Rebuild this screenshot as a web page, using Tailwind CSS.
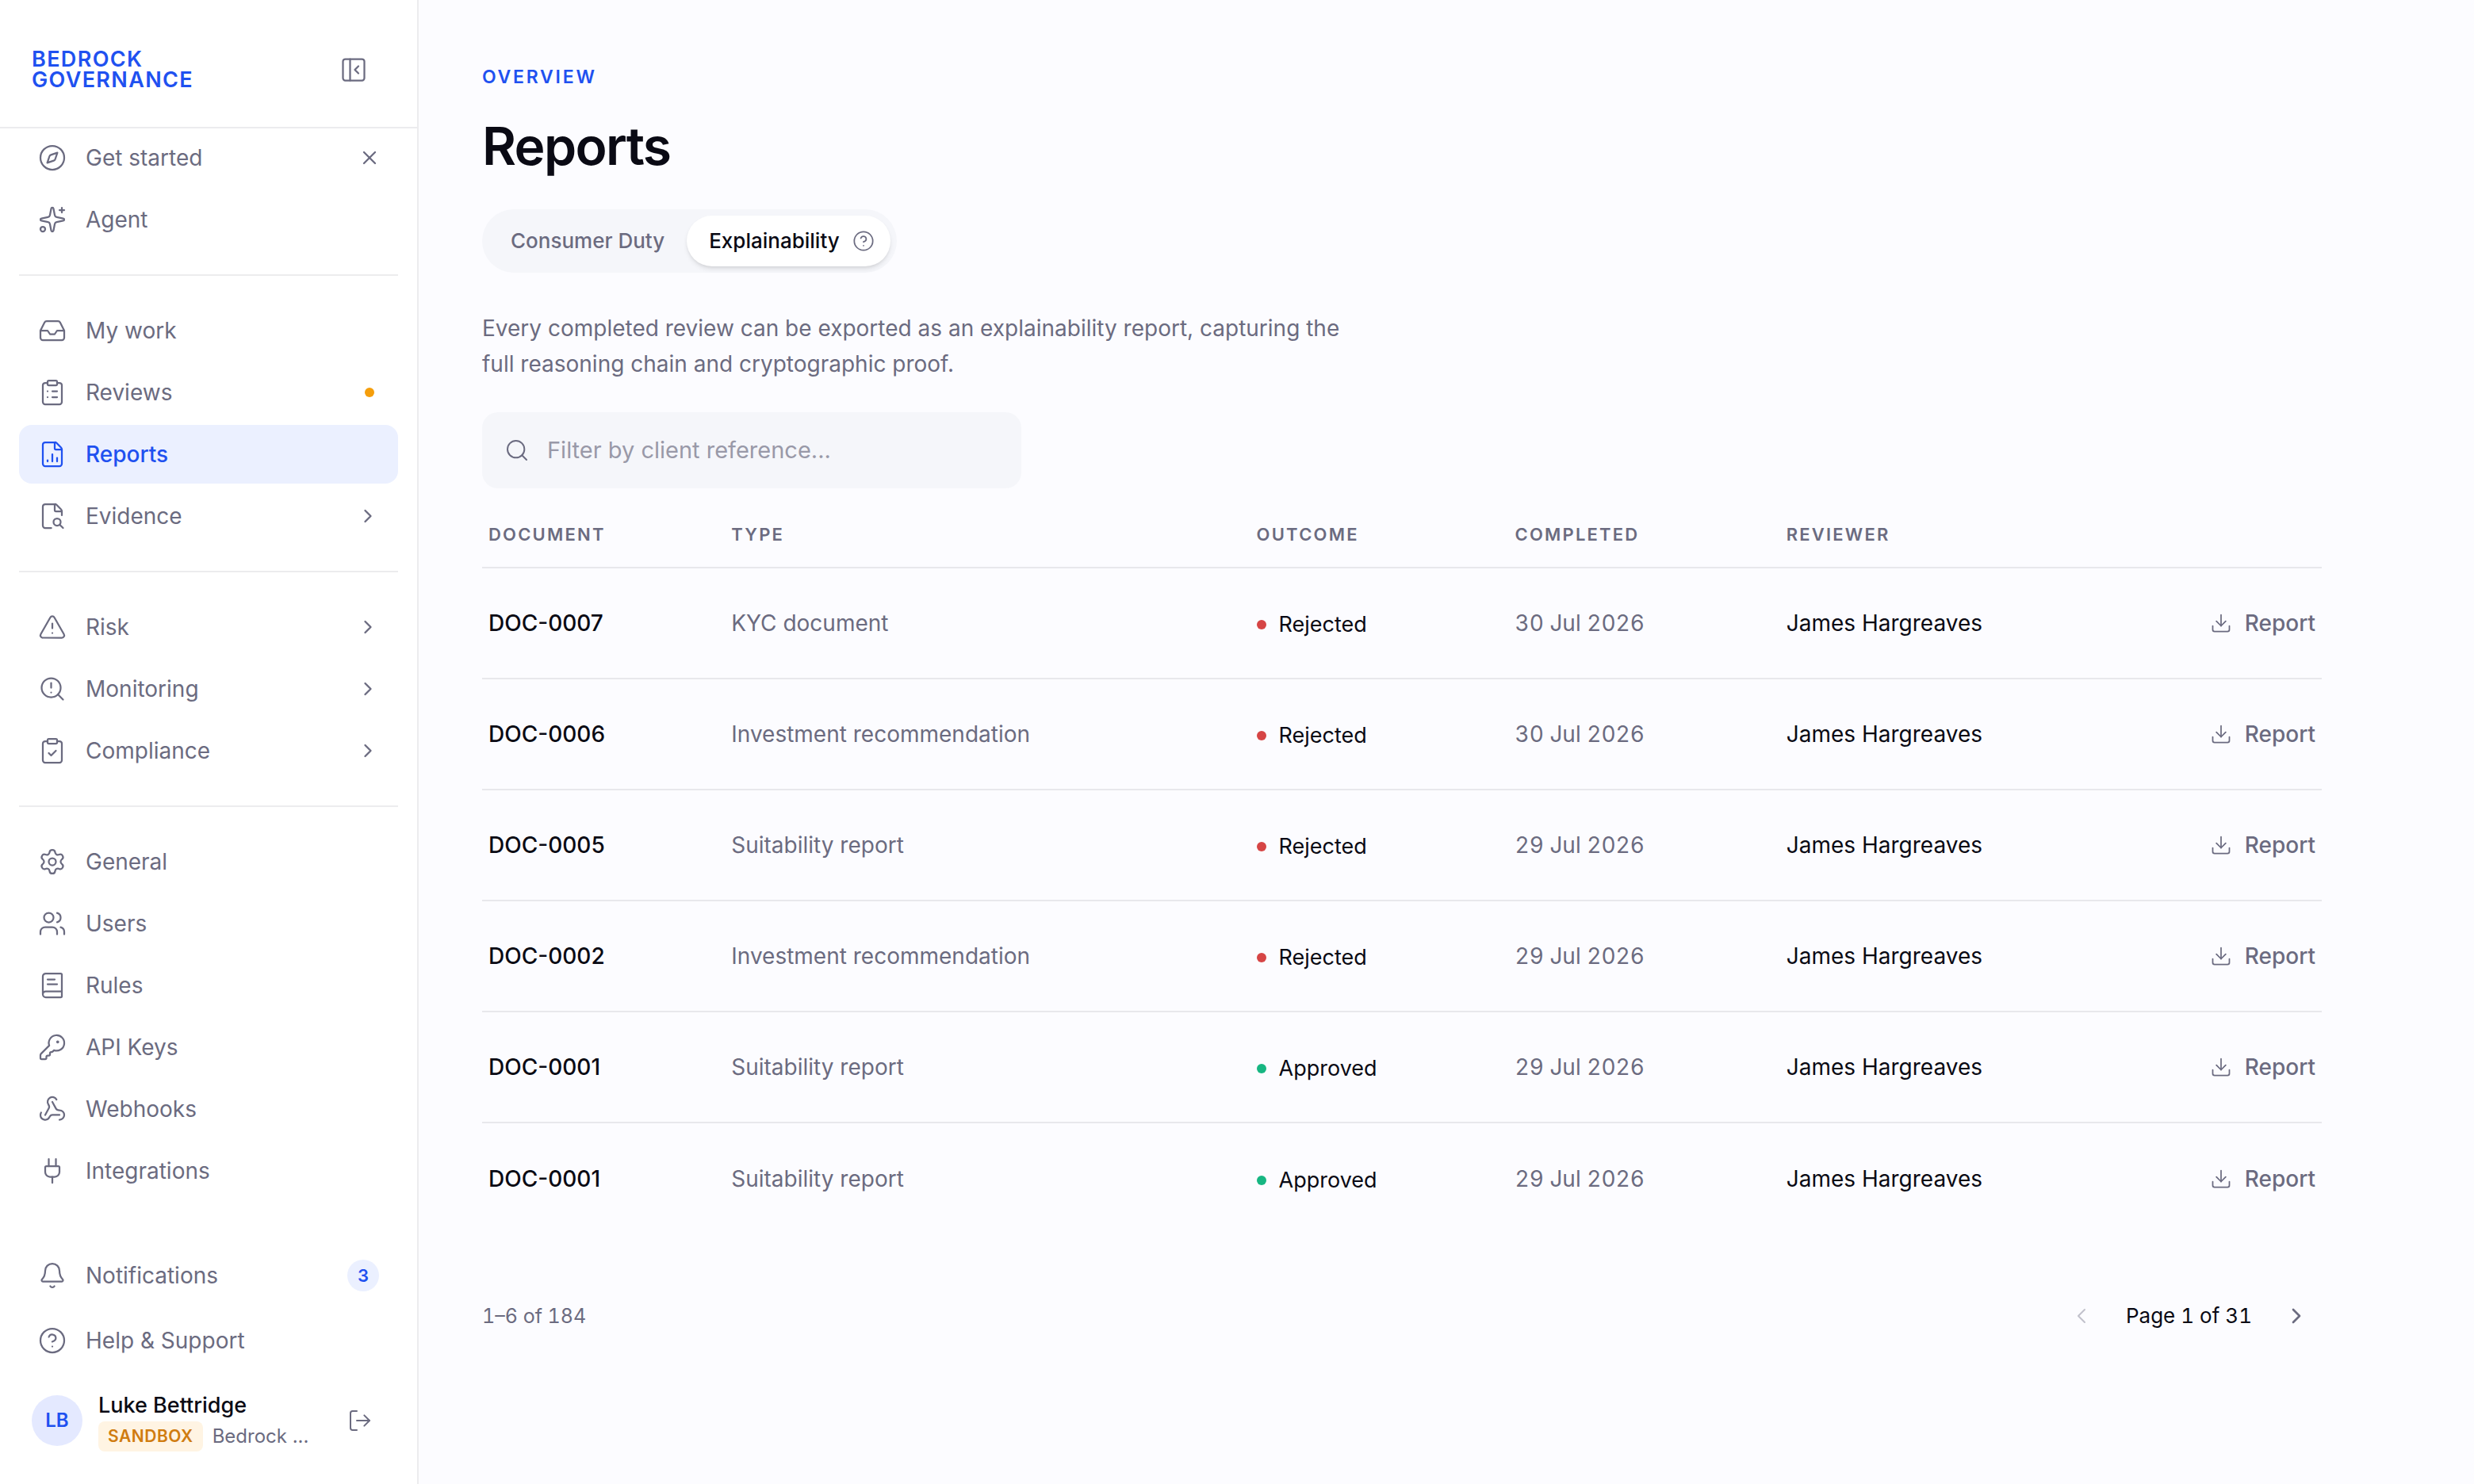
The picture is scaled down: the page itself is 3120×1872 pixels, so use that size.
<!DOCTYPE html>
<html lang="en">
<head>
    <meta charset="UTF-8">
    <meta name="viewport" content="width=device-width, initial-scale=1.0">
    <title>Reports - Bedrock Governance</title>
    <script src="https://cdn.jsdelivr.net/npm/@tailwindcss/browser@4"></script>
</head>
<body class="bg-[#fcfcff] font-['Inter','Liberation_Sans',sans-serif] text-[28px] leading-[42px] text-[#6b6b80] antialiased">
    <!-- Shared icons -->
    <svg class="hidden">
        <symbol id="chevron-right" viewBox="0 0 24 24"><path d="m9 18 6-6-6-6"/></symbol>
        <symbol id="chevron-left" viewBox="0 0 24 24"><path d="m15 18-6-6 6-6"/></symbol>
        <symbol id="help" viewBox="0 0 24 24"><circle cx="12" cy="12" r="10"/><path d="M9.09 9a3 3 0 0 1 5.83 1c0 2-3 3-3 3"/><path d="M12 17h.01"/></symbol>
        <symbol id="download" viewBox="0 0 24 24"><path d="M12 15V3"/><path d="M21 15v4a2 2 0 0 1-2 2H5a2 2 0 0 1-2-2v-4"/><path d="m7 10 5 5 5-5"/></symbol>
    </svg>

    <div class="flex min-h-screen">
        <!-- Sidebar -->
        <aside class="flex w-[528px] shrink-0 flex-col border-r-2 border-[#ececee] bg-white">
            <div class="flex h-[162px] items-center justify-between border-b-2 border-[#ececee] pt-4 pr-[62px] pl-10">
                <a href="#" class="text-[27px] leading-[26px] font-semibold tracking-wider text-[#1f51f0]">BEDROCK<br>GOVERNANCE</a>
                <button type="button" aria-label="Collapse sidebar">
                    <svg class="size-9 fill-none stroke-current stroke-[1.5]" viewBox="0 0 24 24" stroke-linecap="round" stroke-linejoin="round"><rect width="18" height="18" x="3" y="3" rx="2"/><path d="M9 3v18"/><path d="m16 15-3-3 3-3"/></svg>
                </button>
            </div>

            <nav class="flex flex-1 flex-col gap-1 px-6">
                <div class="flex items-center justify-between pr-[22px]">
                    <a href="#" class="flex h-[74px] items-center gap-6 pl-6">
                        <svg class="size-9 fill-none stroke-current stroke-[1.5]" viewBox="0 0 24 24" stroke-linecap="round" stroke-linejoin="round"><path d="m16.24 7.76-1.804 5.411a2 2 0 0 1-1.265 1.265L7.76 16.24l1.804-5.411a2 2 0 0 1 1.265-1.265z"/><circle cx="12" cy="12" r="10"/></svg>
                        Get started
                    </a>
                    <button type="button" aria-label="Dismiss">
                        <svg class="size-7 fill-none stroke-current stroke-2" viewBox="0 0 24 24" stroke-linecap="round"><path d="M18 6 6 18"/><path d="m6 6 12 12"/></svg>
                    </button>
                </div>
                <a href="#" class="flex h-[74px] items-center gap-6 px-6">
                    <svg class="size-9 fill-none stroke-current stroke-[1.5]" viewBox="0 0 24 24" stroke-linecap="round" stroke-linejoin="round"><path d="M11.017 2.814a1 1 0 0 1 1.966 0l1.051 5.558a2 2 0 0 0 1.594 1.594l5.558 1.051a1 1 0 0 1 0 1.966l-5.558 1.051a2 2 0 0 0-1.594 1.594l-1.051 5.558a1 1 0 0 1-1.966 0l-1.051-5.558a2 2 0 0 0-1.594-1.594l-5.558-1.051a1 1 0 0 1 0-1.966l5.558-1.051a2 2 0 0 0 1.594-1.594z"/><path d="M20 2v4"/><path d="M22 4h-4"/><circle cx="4" cy="20" r="2"/></svg>
                    Agent
                </a>

                <hr class="my-7 border-t-2 border-[#ececee]">

                <a href="#" class="flex h-[74px] items-center gap-6 px-6">
                    <svg class="size-9 fill-none stroke-current stroke-[1.5]" viewBox="0 0 24 24" stroke-linecap="round" stroke-linejoin="round"><path d="M22 12h-6l-2 3h-4l-2-3H2"/><path d="M5.45 5.11 2 12v6a2 2 0 0 0 2 2h16a2 2 0 0 0 2-2v-6l-3.45-6.89A2 2 0 0 0 16.76 4H7.24a2 2 0 0 0-1.79 1.11z"/></svg>
                    My work
                </a>
                <a href="#" class="flex h-[74px] items-center gap-6 pr-[30px] pl-6">
                    <svg class="size-9 fill-none stroke-current stroke-[1.5]" viewBox="0 0 24 24" stroke-linecap="round" stroke-linejoin="round"><rect width="8" height="4" x="8" y="2" rx="1"/><path d="M16 4h2a2 2 0 0 1 2 2v14a2 2 0 0 1-2 2H6a2 2 0 0 1-2-2V6a2 2 0 0 1 2-2h2"/><path d="M12 11h4"/><path d="M12 16h4"/><path d="M8 11h.01"/><path d="M8 16h.01"/></svg>
                    Reviews
                    <span class="ml-auto size-3 rounded-full bg-[#f59e0b]"></span>
                </a>
                <a href="#" aria-current="page" class="flex h-[74px] items-center gap-6 rounded-2xl bg-[#ebf0ff] px-6 font-medium text-[#1f51f0]">
                    <svg class="size-9 fill-none stroke-current stroke-[1.5]" viewBox="0 0 24 24" stroke-linecap="round" stroke-linejoin="round"><path d="M6 22a2 2 0 0 1-2-2V4a2 2 0 0 1 2-2h8a2.4 2.4 0 0 1 1.704.706l3.588 3.588A2.4 2.4 0 0 1 20 8v12a2 2 0 0 1-2 2z"/><path d="M14 2v5a1 1 0 0 0 1 1h5"/><path d="M8 18v-1"/><path d="M12 18v-6"/><path d="M16 18v-3"/></svg>
                    Reports
                </a>
                <a href="#" class="flex h-[74px] items-center gap-6 px-6">
                    <svg class="size-9 fill-none stroke-current stroke-[1.5]" viewBox="0 0 24 24" stroke-linecap="round" stroke-linejoin="round"><path d="M11.1 22H6a2 2 0 0 1-2-2V4a2 2 0 0 1 2-2h8a2.4 2.4 0 0 1 1.706.706l3.589 3.588A2.4 2.4 0 0 1 20 8v3.25"/><path d="M14 2v5a1 1 0 0 0 1 1h5"/><path d="m21 22-2.88-2.88"/><circle cx="16" cy="17" r="3"/></svg>
                    Evidence
                    <svg class="ml-auto size-7 fill-none stroke-current stroke-2" stroke-linecap="round" stroke-linejoin="round"><use href="#chevron-right"/></svg>
                </a>

                <hr class="my-7 border-t-2 border-[#ececee]">

                <a href="#" class="flex h-[74px] items-center gap-6 px-6">
                    <svg class="size-9 fill-none stroke-current stroke-[1.5]" viewBox="0 0 24 24" stroke-linecap="round" stroke-linejoin="round"><path d="m21.73 18-8-14a2 2 0 0 0-3.48 0l-8 14A2 2 0 0 0 4 21h16a2 2 0 0 0 1.73-3"/><path d="M12 9v4"/><path d="M12 17h.01"/></svg>
                    Risk
                    <svg class="ml-auto size-7 fill-none stroke-current stroke-2" stroke-linecap="round" stroke-linejoin="round"><use href="#chevron-right"/></svg>
                </a>
                <a href="#" class="flex h-[74px] items-center gap-6 px-6">
                    <svg class="size-9 fill-none stroke-current stroke-[1.5]" viewBox="0 0 24 24" stroke-linecap="round" stroke-linejoin="round"><circle cx="11" cy="11" r="8"/><path d="m21 21-4.3-4.3"/><path d="M11 7v4"/><path d="M11 15h.01"/></svg>
                    Monitoring
                    <svg class="ml-auto size-7 fill-none stroke-current stroke-2" stroke-linecap="round" stroke-linejoin="round"><use href="#chevron-right"/></svg>
                </a>
                <a href="#" class="flex h-[74px] items-center gap-6 px-6">
                    <svg class="size-9 fill-none stroke-current stroke-[1.5]" viewBox="0 0 24 24" stroke-linecap="round" stroke-linejoin="round"><rect width="8" height="4" x="8" y="2" rx="1"/><path d="M16 4h2a2 2 0 0 1 2 2v14a2 2 0 0 1-2 2H6a2 2 0 0 1-2-2V6a2 2 0 0 1 2-2h2"/><path d="m9 14 2 2 4-4"/></svg>
                    Compliance
                    <svg class="ml-auto size-7 fill-none stroke-current stroke-2" stroke-linecap="round" stroke-linejoin="round"><use href="#chevron-right"/></svg>
                </a>

                <hr class="my-7 border-t-2 border-[#ececee]">

                <a href="#" class="flex h-[74px] items-center gap-6 px-6">
                    <svg class="size-9 fill-none stroke-current stroke-[1.5]" viewBox="0 0 24 24" stroke-linecap="round" stroke-linejoin="round"><path d="M9.671 4.136a2.34 2.34 0 0 1 4.659 0 2.34 2.34 0 0 0 3.319 1.915 2.34 2.34 0 0 1 2.33 4.033 2.34 2.34 0 0 0 0 3.831 2.34 2.34 0 0 1-2.33 4.033 2.34 2.34 0 0 0-3.319 1.915 2.34 2.34 0 0 1-4.659 0 2.34 2.34 0 0 0-3.32-1.915 2.34 2.34 0 0 1-2.33-4.033 2.34 2.34 0 0 0 0-3.831A2.34 2.34 0 0 1 6.35 6.051a2.34 2.34 0 0 0 3.319-1.915"/><circle cx="12" cy="12" r="3"/></svg>
                    General
                </a>
                <a href="#" class="flex h-[74px] items-center gap-6 px-6">
                    <svg class="size-9 fill-none stroke-current stroke-[1.5]" viewBox="0 0 24 24" stroke-linecap="round" stroke-linejoin="round"><path d="M16 21v-2a4 4 0 0 0-4-4H6a4 4 0 0 0-4 4v2"/><path d="M16 3.128a4 4 0 0 1 0 7.744"/><path d="M22 21v-2a4 4 0 0 0-3-3.87"/><circle cx="9" cy="7" r="4"/></svg>
                    Users
                </a>
                <a href="#" class="flex h-[74px] items-center gap-6 px-6">
                    <svg class="size-9 fill-none stroke-current stroke-[1.5]" viewBox="0 0 24 24" stroke-linecap="round" stroke-linejoin="round"><path d="M4 19.5v-15A2.5 2.5 0 0 1 6.5 2H19a1 1 0 0 1 1 1v18a1 1 0 0 1-1 1H6.5a1 1 0 0 1 0-5H20"/><path d="M8 11h8"/><path d="M8 7h6"/></svg>
                    Rules
                </a>
                <a href="#" class="flex h-[74px] items-center gap-6 px-6">
                    <svg class="size-9 fill-none stroke-current stroke-[1.5]" viewBox="0 0 24 24" stroke-linecap="round" stroke-linejoin="round"><path d="M2.586 17.414A2 2 0 0 0 2 18.828V21a1 1 0 0 0 1 1h3a1 1 0 0 0 1-1v-1a1 1 0 0 1 1-1h1a1 1 0 0 0 1-1v-1a1 1 0 0 1 1-1h.172a2 2 0 0 0 1.414-.586l.814-.814a6.5 6.5 0 1 0-4-4z"/><circle cx="16.5" cy="7.5" r=".5" fill="currentColor"/></svg>
                    API Keys
                </a>
                <a href="#" class="flex h-[74px] items-center gap-6 px-6">
                    <svg class="size-9 fill-none stroke-current stroke-[1.5]" viewBox="0 0 24 24" stroke-linecap="round" stroke-linejoin="round"><path d="M18 16.98h-5.99c-1.1 0-1.95.94-2.48 1.9A4 4 0 0 1 2 17c.01-.7.2-1.4.57-2"/><path d="m6 17 3.13-5.78c.53-.97.1-2.18-.5-3.1a4 4 0 1 1 6.89-4.06"/><path d="m12 6 3.13 5.73C15.66 12.7 16.9 13 18 13a4 4 0 0 1 0 8"/></svg>
                    Webhooks
                </a>
                <a href="#" class="flex h-[74px] items-center gap-6 px-6">
                    <svg class="size-9 fill-none stroke-current stroke-[1.5]" viewBox="0 0 24 24" stroke-linecap="round" stroke-linejoin="round"><path d="M12 22v-5"/><path d="M15 8V2"/><path d="M17 8a1 1 0 0 1 1 1v4a4 4 0 0 1-4 4h-4a4 4 0 0 1-4-4V9a1 1 0 0 1 1-1z"/><path d="M9 8V2"/></svg>
                    Integrations
                </a>
            </nav>

            <!-- Sidebar footer -->
            <div class="flex flex-col gap-2 px-6 pb-[34px]">
                <a href="#" class="flex h-[74px] items-center gap-6 px-6">
                    <svg class="size-9 fill-none stroke-current stroke-[1.5]" viewBox="0 0 24 24" stroke-linecap="round" stroke-linejoin="round"><path d="M10.268 21a2 2 0 0 0 3.464 0"/><path d="M3.262 15.326A1 1 0 0 0 4 17h16a1 1 0 0 0 .74-1.673C19.41 13.956 18 12.499 18 8A6 6 0 0 0 6 8c0 4.499-1.411 5.956-2.738 7.326"/></svg>
                    Notifications
                    <span class="ml-auto flex size-10 items-center justify-center rounded-full bg-[#ebf0ff] text-[22px] font-semibold text-[#1f51f0]">3</span>
                </a>
                <a href="#" class="flex h-[74px] items-center gap-6 px-6">
                    <svg class="size-9 fill-none stroke-current stroke-[1.5]" stroke-linecap="round" stroke-linejoin="round"><use href="#help"/></svg>
                    Help &amp; Support
                </a>
                <div class="mt-[10px] flex h-[92px] items-center gap-5 pr-8 pl-4">
                    <span class="flex size-16 shrink-0 items-center justify-center rounded-full bg-[#e4e9ff] text-[24px] font-semibold text-[#1f51f0]">LB</span>
                    <div class="min-w-0 flex-1">
                        <p class="text-[27px] leading-[40px] font-medium text-[#0a0a14]">Luke Bettridge</p>
                        <p class="flex items-center gap-3 text-[24px] leading-[38px]">
                            <span class="rounded-lg bg-[#fff4e3] px-3 text-[21px] font-semibold tracking-wide text-[#d07c10]">SANDBOX</span>
                            <span>Bedrock ...</span>
                        </p>
                    </div>
                    <button type="button" aria-label="Sign out">
                        <svg class="size-8 fill-none stroke-current stroke-[1.5]" viewBox="0 0 24 24" stroke-linecap="round" stroke-linejoin="round"><path d="m16 17 5-5-5-5"/><path d="M21 12H9"/><path d="M9 21H5a2 2 0 0 1-2-2V5a2 2 0 0 1 2-2h4"/></svg>
                    </button>
                </div>
            </div>
        </aside>

        <!-- Main content -->
        <main class="min-w-0 flex-1 pt-20 pr-48 pb-20 pl-20">
            <p class="text-[23px] leading-[34px] font-semibold tracking-[0.12em] text-[#1f51f0]">OVERVIEW</p>
            <h1 class="mt-[30px] text-[66px] leading-[80px] font-semibold tracking-tight text-[#0a0a14]">Reports</h1>

            <div class="mt-10 inline-flex rounded-full bg-[#f5f6fa] p-2 text-[26px] font-medium">
                <button type="button" class="h-16 rounded-full px-7">Consumer Duty</button>
                <button type="button" class="flex h-16 items-center gap-4 rounded-full bg-white pr-5 pl-7 text-[#0a0a14] shadow-md shadow-black/10">
                    Explainability
                    <svg class="size-7 fill-none stroke-[#6b6b80] stroke-[1.5]" stroke-linecap="round" stroke-linejoin="round"><use href="#help"/></svg>
                </button>
            </div>

            <p class="mt-12 max-w-[1120px] leading-[45px]">Every completed review can be exported as an explainability report, capturing the full reasoning chain and cryptographic proof.</p>

            <label class="mt-[38px] flex h-24 w-[680px] items-center gap-[22px] rounded-[20px] bg-[#f5f6fa] px-7">
                <svg class="size-8 shrink-0 fill-none stroke-current stroke-[1.5]" viewBox="0 0 24 24" stroke-linecap="round" stroke-linejoin="round"><circle cx="11" cy="11" r="8"/><path d="m21 21-4.3-4.3"/></svg>
                <input type="text" aria-label="Filter by client reference" placeholder="Filter by client reference..." class="min-w-0 flex-1 text-[29px] text-[#0a0a14] outline-none placeholder:text-[#9999a8]">
            </label>

            <table class="mt-4 w-full table-fixed text-left">
                <colgroup>
                    <col class="w-[13.2%]">
                    <col class="w-[28.55%]">
                    <col class="w-[14.05%]">
                    <col class="w-[14.75%]">
                    <col class="w-[17%]">
                    <col>
                </colgroup>
                <thead>
                    <tr class="h-[84px] border-b-2 border-[#e8e8ec] text-[22px] tracking-widest">
                        <th class="px-2 font-semibold">DOCUMENT</th>
                        <th class="px-2 font-semibold">TYPE</th>
                        <th class="px-2 font-semibold">OUTCOME</th>
                        <th class="px-2 font-semibold">COMPLETED</th>
                        <th class="px-2 font-semibold">REVIEWER</th>
                        <td></td>
                    </tr>
                </thead>
                <tbody class="divide-y-2 divide-[#e8e8ec]">
                    <tr class="h-[140px]">
                        <td class="px-2 font-medium text-[#0a0a14]">DOC-0007</td>
                        <td class="px-2">KYC document</td>
                        <td class="px-2 pt-1"><span class="flex items-center gap-4 text-[27px] text-[#0a0a14]"><span class="size-3 rounded-full bg-[#d64545]"></span>Rejected</span></td>
                        <td class="px-2 tabular-nums">30 Jul 2026</td>
                        <td class="px-2 text-[#0a0a14]">James Hargreaves</td>
                        <td class="px-2"><button type="button" class="ml-auto flex items-center gap-4 font-medium"><svg class="size-7 fill-none stroke-current stroke-[1.5]" stroke-linecap="round" stroke-linejoin="round"><use href="#download"/></svg>Report</button></td>
                    </tr>
                    <tr class="h-[140px]">
                        <td class="px-2 font-medium text-[#0a0a14]">DOC-0006</td>
                        <td class="px-2">Investment recommendation</td>
                        <td class="px-2 pt-1"><span class="flex items-center gap-4 text-[27px] text-[#0a0a14]"><span class="size-3 rounded-full bg-[#d64545]"></span>Rejected</span></td>
                        <td class="px-2 tabular-nums">30 Jul 2026</td>
                        <td class="px-2 text-[#0a0a14]">James Hargreaves</td>
                        <td class="px-2"><button type="button" class="ml-auto flex items-center gap-4 font-medium"><svg class="size-7 fill-none stroke-current stroke-[1.5]" stroke-linecap="round" stroke-linejoin="round"><use href="#download"/></svg>Report</button></td>
                    </tr>
                    <tr class="h-[140px]">
                        <td class="px-2 font-medium text-[#0a0a14]">DOC-0005</td>
                        <td class="px-2">Suitability report</td>
                        <td class="px-2 pt-1"><span class="flex items-center gap-4 text-[27px] text-[#0a0a14]"><span class="size-3 rounded-full bg-[#d64545]"></span>Rejected</span></td>
                        <td class="px-2 tabular-nums">29 Jul 2026</td>
                        <td class="px-2 text-[#0a0a14]">James Hargreaves</td>
                        <td class="px-2"><button type="button" class="ml-auto flex items-center gap-4 font-medium"><svg class="size-7 fill-none stroke-current stroke-[1.5]" stroke-linecap="round" stroke-linejoin="round"><use href="#download"/></svg>Report</button></td>
                    </tr>
                    <tr class="h-[140px]">
                        <td class="px-2 font-medium text-[#0a0a14]">DOC-0002</td>
                        <td class="px-2">Investment recommendation</td>
                        <td class="px-2 pt-1"><span class="flex items-center gap-4 text-[27px] text-[#0a0a14]"><span class="size-3 rounded-full bg-[#d64545]"></span>Rejected</span></td>
                        <td class="px-2 tabular-nums">29 Jul 2026</td>
                        <td class="px-2 text-[#0a0a14]">James Hargreaves</td>
                        <td class="px-2"><button type="button" class="ml-auto flex items-center gap-4 font-medium"><svg class="size-7 fill-none stroke-current stroke-[1.5]" stroke-linecap="round" stroke-linejoin="round"><use href="#download"/></svg>Report</button></td>
                    </tr>
                    <tr class="h-[140px]">
                        <td class="px-2 font-medium text-[#0a0a14]">DOC-0001</td>
                        <td class="px-2">Suitability report</td>
                        <td class="px-2 pt-1"><span class="flex items-center gap-4 text-[27px] text-[#0a0a14]"><span class="size-3 rounded-full bg-[#17b682]"></span>Approved</span></td>
                        <td class="px-2 tabular-nums">29 Jul 2026</td>
                        <td class="px-2 text-[#0a0a14]">James Hargreaves</td>
                        <td class="px-2"><button type="button" class="ml-auto flex items-center gap-4 font-medium"><svg class="size-7 fill-none stroke-current stroke-[1.5]" stroke-linecap="round" stroke-linejoin="round"><use href="#download"/></svg>Report</button></td>
                    </tr>
                    <tr class="h-[140px]">
                        <td class="px-2 font-medium text-[#0a0a14]">DOC-0001</td>
                        <td class="px-2">Suitability report</td>
                        <td class="px-2 pt-1"><span class="flex items-center gap-4 text-[27px] text-[#0a0a14]"><span class="size-3 rounded-full bg-[#17b682]"></span>Approved</span></td>
                        <td class="px-2 tabular-nums">29 Jul 2026</td>
                        <td class="px-2 text-[#0a0a14]">James Hargreaves</td>
                        <td class="px-2"><button type="button" class="ml-auto flex items-center gap-4 font-medium"><svg class="size-7 fill-none stroke-current stroke-[1.5]" stroke-linecap="round" stroke-linejoin="round"><use href="#download"/></svg>Report</button></td>
                    </tr>
                </tbody>
            </table>

            <!-- Pagination -->
            <div class="mt-[72px] flex items-center justify-between text-[26px]">
                <p class="text-[25px] tabular-nums">1–6 of 184</p>
                <div class="flex items-center gap-6">
                    <button type="button" disabled aria-label="Previous page" class="flex size-16 items-center justify-center opacity-40"><svg class="size-8 fill-none stroke-current stroke-[1.5]" stroke-linecap="round" stroke-linejoin="round"><use href="#chevron-left"/></svg></button>
                    <span class="text-[#0a0a14] tabular-nums">Page 1 of 31</span>
                    <button type="button" aria-label="Next page" class="flex size-16 items-center justify-center"><svg class="size-8 fill-none stroke-current stroke-2" stroke-linecap="round" stroke-linejoin="round"><use href="#chevron-right"/></svg></button>
                </div>
            </div>
        </main>
    </div>
</body>
</html>
